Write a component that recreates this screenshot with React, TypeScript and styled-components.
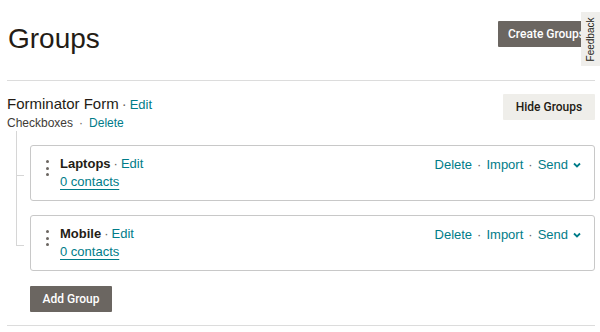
import React from "react";
import styled, { createGlobalStyle } from "styled-components";

const Global = createGlobalStyle`
  html, body { margin: 0; padding: 0; background: #fff; }
  body { font-family: "Liberation Sans", Arial, sans-serif; color: #241c15; }
`;

const TEAL = "#007c89";

const Page = styled.div`
  padding: 0 5px 0 7px;
  position: relative;
`;

const Header = styled.div`
  display: flex;
  align-items: flex-start;
  justify-content: space-between;
  height: 80px;
  border-bottom: 1px solid #dcdcdc;
`;

const Title = styled.h1`
  margin: 22px 0 0 1px;
  font-size: 28px;
  font-weight: 400;
  line-height: 34px;
  letter-spacing: 0;
`;

const Button = styled.button<{ $variant?: "dark" | "light" }>`
  font-family: Roboto, "Liberation Sans", Arial, sans-serif;
  font-size: 12px;
  font-weight: 500;
  white-space: nowrap;
  height: 26px;
  border: none;
  border-radius: 1px;
  padding: 0;
  cursor: pointer;
  background: ${(p) => (p.$variant === "light" ? "#efeeea" : "#6b6661")};
  color: ${(p) => (p.$variant === "light" ? "#241c15" : "#ffffff")};
`;

const CreateButton = styled(Button)`
  margin-top: 21px;
  width: 97px;
`;

const Section = styled.div`
  padding-top: 13px;
  padding-bottom: 13px;
  border-bottom: 1px solid #dcdcdc;
`;

const SectionHead = styled.div`
  display: flex;
  justify-content: space-between;
  align-items: flex-start;
`;

const FormTitle = styled.div`
  font-size: 15px;
  line-height: 20px;
  display: flex;
  align-items: baseline;
`;

const Sep = styled.span<{ $gap?: number }>`
  margin: 0 ${(p) => p.$gap ?? 3}px;
  color: #6b6661;
`;

const Link = styled.a<{ $size?: number }>`
  color: ${TEAL};
  font-size: ${(p) => p.$size ?? 13}px;
  text-decoration: none;
  cursor: pointer;
`;

const SubLine = styled.div`
  font-size: 12px;
  line-height: 16px;
  color: #403b36;
  display: flex;
  align-items: baseline;
`;

const HideButton = styled(Button)`
  width: 92px;
`;

const Tree = styled.div`
  margin-left: 23px;
`;

const Row = styled.div`
  position: relative;
  padding-top: 14px;
  &::before {
    content: "";
    position: absolute;
    left: -14px;
    top: 0;
    bottom: 0;
    border-left: 1px solid #d6d6d6;
  }
  &:last-child::before {
    bottom: auto;
    height: 44px;
  }
  &::after {
    content: "";
    position: absolute;
    left: -14px;
    top: 44px;
    width: 8px;
    border-top: 1px solid #d6d6d6;
  }
`;

const Card = styled.div`
  height: 56px;
  box-sizing: border-box;
  border: 1px solid #c8c8c8;
  border-radius: 3px;
  display: flex;
  align-items: flex-start;
  padding: 9px 13px 0 15px;
`;

const Handle = styled.div`
  display: flex;
  flex-direction: column;
  gap: 3.5px;
  padding-top: 5px;
  width: 14px;
  span {
    width: 3px;
    height: 3px;
    border-radius: 50%;
    background: #6b6661;
  }
`;

const CardBody = styled.div`
  flex: 1;
  display: flex;
  flex-direction: column;
`;

const CardTitle = styled.div`
  font-size: 13px;
  line-height: 17px;
  display: flex;
  align-items: baseline;
  b {
    font-weight: 700;
    color: #241c15;
  }
`;

const Contacts = styled.a`
  color: ${TEAL};
  font-size: 13px;
  line-height: 19px;
  text-decoration: underline;
  text-underline-offset: 3px;
  text-decoration-thickness: 1px;
  align-self: flex-start;
  cursor: pointer;
`;

const Actions = styled.div`
  display: flex;
  align-items: center;
  font-size: 13px;
  line-height: 17px;
  padding-top: 1px;
`;

const Chevron = styled.svg`
  margin-left: 5px;
  width: 8px;
  height: 6px;
`;

const AddButton = styled(Button)`
  margin-top: 15px;
  margin-left: 23px;
  width: 82px;
`;

const Feedback = styled.div`
  position: absolute;
  right: 0;
  top: 12px;
  width: 19px;
  height: 54px;
  background: #efeeeb;
  display: flex;
  align-items: center;
  justify-content: center;
  span {
    transform: rotate(-90deg);
    font-size: 10px;
    color: #241c15;
    white-space: nowrap;
    font-family: "Liberation Sans", Arial, sans-serif;
  }
`;

const groups = ["Laptops", "Mobile"];

export default function App() {
  return (
    <>
      <Global />
      <Page>
        <Header>
          <Title>Groups</Title>
          <CreateButton>Create Groups</CreateButton>
        </Header>
        <Section>
          <SectionHead>
            <div>
              <FormTitle>
                Forminator Form<Sep>·</Sep>
                <Link $size={13}>Edit</Link>
              </FormTitle>
              <SubLine>
                Checkboxes<Sep $gap={6}>·</Sep>
                <Link $size={12}>Delete</Link>
              </SubLine>
            </div>
            <HideButton $variant="light">Hide Groups</HideButton>
          </SectionHead>
          <Tree>
            {groups.map((g) => (
              <Row key={g}>
                <Card>
                  <Handle>
                    <span />
                    <span />
                    <span />
                  </Handle>
                  <CardBody>
                    <CardTitle>
                      <b>{g}</b>
                      <Sep>·</Sep>
                      <Link>Edit</Link>
                    </CardTitle>
                    <Contacts>0 contacts</Contacts>
                  </CardBody>
                  <Actions>
                    <Link>Delete</Link>
                    <Sep $gap={5}>·</Sep>
                    <Link>Import</Link>
                    <Sep $gap={5}>·</Sep>
                    <Link>Send</Link>
                    <Chevron viewBox="0 0 8 6">
                      <path d="M1 1.5 L4 4.5 L7 1.5" fill="none" stroke={TEAL} strokeWidth="1.8" />
                    </Chevron>
                  </Actions>
                </Card>
              </Row>
            ))}
          </Tree>
          <AddButton>Add Group</AddButton>
        </Section>
        <Feedback>
          <span>Feedback</span>
        </Feedback>
      </Page>
    </>
  );
}
